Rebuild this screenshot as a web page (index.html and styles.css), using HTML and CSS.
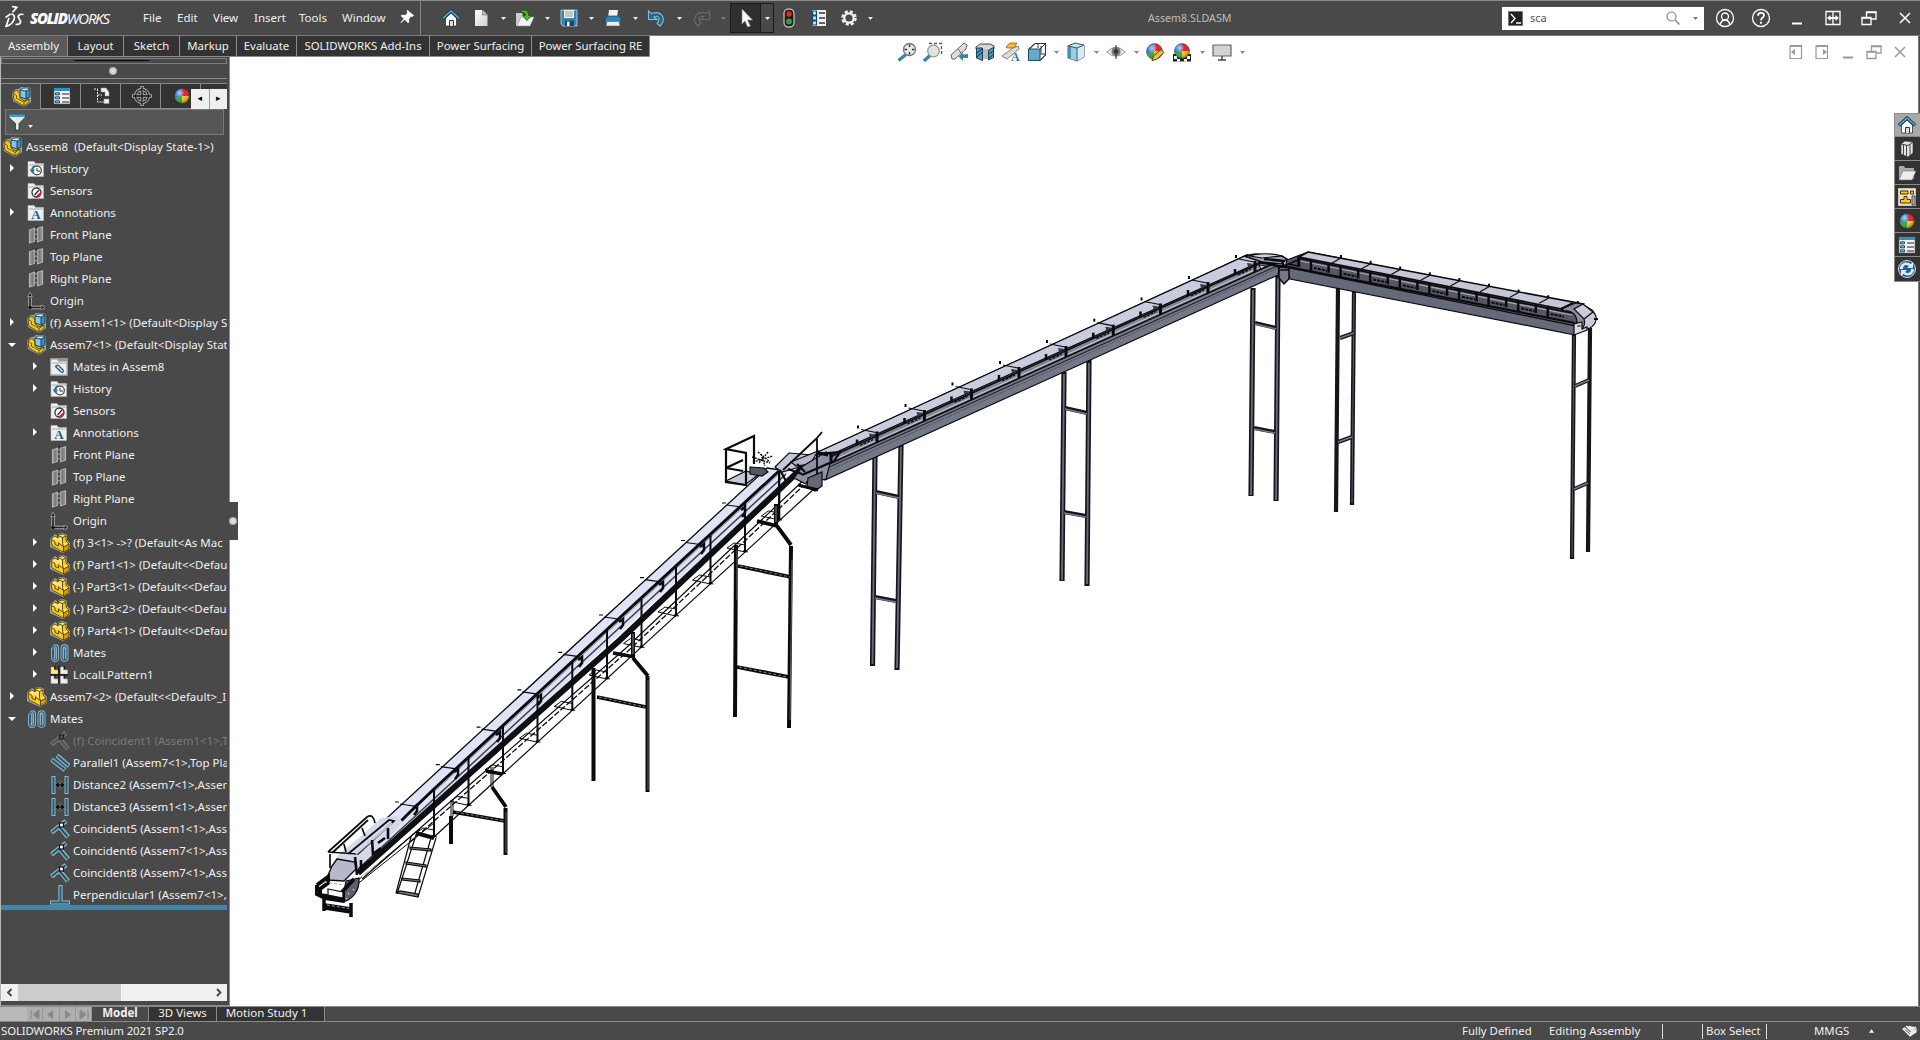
FILE: index.html
```html
<!DOCTYPE html>
<html lang="en">
<head>
<meta charset="utf-8">
<title>Assem8.SLDASM</title>
<link rel="stylesheet" href="styles.css">
</head>
<body>
<svg class="defs" width="0" height="0">
  <defs>
    <linearGradient id="paper" x1="0" y1="0" x2="1" y2="1"><stop offset="0" stop-color="#fff"/><stop offset="1" stop-color="#cfcfcf"/></linearGradient>
    <clipPath id="ballclip"><circle cx="9" cy="9" r="7.5"/></clipPath>
    <radialGradient id="shine" cx=".35" cy=".3" r=".7"><stop offset="0" stop-color="#fff" stop-opacity=".65"/><stop offset=".5" stop-color="#fff" stop-opacity="0"/><stop offset="1" stop-color="#000" stop-opacity=".35"/></radialGradient>
  </defs>
  <symbol id="i-part" viewBox="0 0 20 20">
    <path d="M0 6 5 1 8 3V1l5-1 4 2v5l3 3v6l-7 4L0 14Z" fill="#a8a8a8"/>
    <path d="M1 6l4-3 3 2V2l5-1 3 2v5l3 3v5l-6 3L2 13Z" fill="#f7cb1c"/><path d="M1 6l4-3 3 2V2l5-1 3 2-4 1.500v5L19 11l-5 3-4-3V8L6 9Z" fill="#ffe27a"/>
    <path d="M13.500 14 19 11v5l-5.500 3Z" fill="#d99a00"/><path d="M8 5V2.500l4.500 2L16 3M12.500 4.500v5.500l1 4L19 11M13.500 14v5M1.500 6.500l3.500 2v3l3.500 1.500v-3l5 3.500" fill="none" stroke="#4b3a00" stroke-width=".9"/>
    <path d="M1 6l4-3 3 2V2l5-1 3 2v5l3 3v5l-5.500 3L2 13Z" fill="none" stroke="#4b3a00" stroke-width=".8"/>
  </symbol>
  <symbol id="i-asm" viewBox="0 0 20 20">
    <path d="M0 6 4 2h3l2-2h7l3 2v13l-7 5L1 14Z" fill="#a8a8a8"/>
    <path d="M1 6l4-3 3 4v4l4 3 5-2v3l-5 4L2 13Z" fill="#f7cb1c" stroke="#4b3a00" stroke-width=".8"/>
    <path d="M1.500 6.500l3 2v3l3.500 1.500 4 2.500v4M12 15.500l5-3.500" fill="none" stroke="#4b3a00" stroke-width=".8"/>
    <path d="M8 3l3-2h5l2 1-4 2Z" fill="#d9f0fa"/><path d="M8 3l6 1v8l-6-2Z" fill="#86c5e4"/><path d="M14 4l4-2v8l-4 2Z" fill="#3f8fb8"/>
    <path d="M8 3l3-2h5l2 1v8l-4 2-6-2ZM14 12V4l4-2M8 3l6 1" fill="none" stroke="#143a50" stroke-width=".9"/>
  </symbol>
  <symbol id="i-folder" viewBox="0 0 18 18"><path d="M1 1.500h6l1.500 2H16.500V16.500H1Z" fill="#efefef" stroke="#bbb" stroke-width=".6"/><path d="M2 5h14" stroke="#999" stroke-width=".8"/></symbol>
  <symbol id="i-history" viewBox="0 0 18 18"><use href="#i-folder"/><circle cx="10" cy="10.500" r="4.300" fill="#fff" stroke="#444" stroke-width="1.200"/><path d="M10 8v3h3" fill="none" stroke="#333"/><path d="M2.500 9.500H8L5.300 13.500Z" fill="#1f77a8"/><path d="M5 10c0-2 1-3.500 3-4" fill="none" stroke="#1f77a8" stroke-width="1.600"/></symbol>
  <symbol id="i-sensor" viewBox="0 0 18 18"><use href="#i-folder"/><circle cx="9.500" cy="10.500" r="4.500" fill="#fff" stroke="#333" stroke-width="1.300"/><path d="M9 14.500 13.500 10.500A4.500 4.500 0 0 1 9 15Z" fill="#d3232a" stroke="#d3232a"/><path d="M7.500 13 12 8" stroke="#222" stroke-width="1.200"/></symbol>
  <symbol id="i-annot" viewBox="0 0 18 18"><use href="#i-folder"/><text x="9" y="15.300" text-anchor="middle" font-family="Liberation Serif, serif" font-weight="bold" font-size="13" fill="#1b5f80">A</text></symbol>
  <symbol id="i-matefolder" viewBox="0 0 18 18"><rect x="0" y="0" width="18" height="18" rx="1" fill="#999"/><use href="#i-folder"/><path d="M5 8l6 6c1.500 1 3-.5 2-2L8.500 7.500C7 6.500 5.500 8 6.500 9.500l4 3.500" fill="none" stroke="#2a5d78" stroke-width="1.300"/></symbol>
  <symbol id="i-plane" viewBox="0 0 18 18"><path d="M2.500 4 8 2.200V15L2.500 17ZM10 2.500 15.500.8V14L10 16Z" fill="#8d8d8d" stroke="#b4b4b4" stroke-width="1.200"/><path d="M5.300 3.500V16M12.700 2V15" stroke="#777"/><path d="M9 0V18" stroke="#222" stroke-width="1.200" stroke-dasharray="3 1.500"/></symbol>
  <symbol id="i-origin" viewBox="0 0 18 18"><path d="M3 2V15.500H17" fill="none" stroke="#aaa" stroke-width="3.600"/><path d="M3 2V15.500H16" fill="none" stroke="#1a1a1a" stroke-width="1.500"/><path d="M.7 4.500 3 0 5.300 4.500ZM14 13 18 15.500 14 18Z" fill="#1a1a1a" stroke="#aaa" stroke-width=".7"/><circle cx="3" cy="15.500" r="1.800" fill="#111"/></symbol>
  <symbol id="i-mates" viewBox="0 0 20 20"><g fill="none" stroke-linecap="round"><path d="M2.500 6v8c0 4 5 5 5 1V5c0-3-3.500-3-3.500 0v9M12 5v10c0 3 5 3 5 0V5c0-3-5-3-5 0M14.500 6v11" stroke="#9db4c0" stroke-width="3"/><path d="M2.500 6v8c0 4 5 5 5 1V5c0-3-4-3-4 0v9M12 5v10c0 3 5 3 5 0V5c0-3-5-3-5 0M14.500 6v11" stroke="#245f80" stroke-width="1.200"/></g></symbol>
  <symbol id="i-pattern" viewBox="0 0 18 18"><g stroke="#aaa" stroke-width=".5"><path d="M1 1h3v3h4v4H1Z" fill="#ffef62"/><path d="M10.500 1h3v3h4v4h-7ZM1 10h3v3h4v4.500H1ZM10.500 10h3v3h4v4.500h-7Z" fill="#eee"/></g><path d="M5 0v3M14.500 0v3M5 9.500v2M14.500 9.500v2M8.800 0V18M0 8.800H18" stroke="#151515" stroke-width="1.300"/></symbol>
  <symbol id="i-coin" viewBox="0 0 20 20"><path d="M16 2 1.500 13.500M8.500 6.500 18 18" stroke="#98b4c2" stroke-width="4.600"/><path d="M15.500 2.500 2 13M9 7.500 17.500 17.500" stroke="#1f5570" stroke-width="2"/><rect x="9.500" y="4" width="4" height="4" fill="#fff" stroke="#111" stroke-width="1.200"/></symbol>
  <symbol id="i-coinoff" viewBox="0 0 20 20"><path d="M16 2 1.500 13.500M8.500 6.500 18 18" stroke="#777" stroke-width="4.500"/><path d="M15.500 2.500 2 13M9 7.500 17.500 17.500" stroke="#555" stroke-width="2.400"/><rect x="9.500" y="4" width="4" height="4" fill="#555" stroke="#222" stroke-width="1.200"/></symbol>
  <symbol id="i-par" viewBox="0 0 20 20"><path d="M1.500 6.500 15 17M7 2.500 19 13" stroke="#98b4c2" stroke-width="4.600"/><path d="M2 7 14.500 16.500M7.500 3 18.500 12.500" stroke="#1f5f80" stroke-width="2.200"/></symbol>
  <symbol id="i-dist" viewBox="0 0 20 20"><path d="M3.500 1V19M16.500 1V19" stroke="#98b4c2" stroke-width="4"/><path d="M3.500 2V18M16.500 2V18" stroke="#1f5f80" stroke-width="2"/><path d="M5 10l4-4v3h2V6l4 4-4 4v-3H9v3Z" fill="#111" stroke="#999" stroke-width=".5"/></symbol>
  <symbol id="i-perp" viewBox="0 0 20 20"><path d="M10.500 0V17M0 17.500H20" stroke="#98b4c2" stroke-width="4.200"/><path d="M10.500 1V17M1 17.500H19" stroke="#1f5f80" stroke-width="2"/></symbol>
  <symbol id="i-list" viewBox="0 0 18 18"><path d="M1 1H17V17H1Z" fill="#f2f2f2" stroke="#555" stroke-width=".6"/><path d="M1 1H17V4H1Z" fill="#2f93c0"/><path d="M9 7h7M9 11h7M9 15h7" stroke="#222" stroke-width="1.200"/><g fill="#9fd0e8" stroke="#174a66"><path d="M2.500 5.800h4v2h-4ZM2.500 9.800h4v2h-4ZM2.500 13.800h4v2h-4Z"/></g></symbol>
  <symbol id="i-opts" viewBox="0 0 18 18"><path d="M2 1H16V17H2Z" fill="#f2f2f2"/><path d="M9 4h6M9 9h6M9 14h6" stroke="#333" stroke-width="1.300"/><g fill="#cfe6f2" stroke="#174a66" stroke-width="1.200"><path d="M2.500 2h4v4h-4ZM2.500 7h4v4h-4ZM2.500 12h4v4h-4Z"/></g></symbol>
  <symbol id="i-tree" viewBox="0 0 18 18"><path d="M1 2h4M4.500 2V15H11M4.500 8H9M9 3h3" stroke="#eee" fill="none" stroke-dasharray="2 1"/><path d="M8 1h5l3 4v4h-4V5H8ZM11 12h5v4.500h-5Z" fill="#f0f0f0" stroke="#999" stroke-width=".5"/></symbol>
  <symbol id="i-target" viewBox="0 0 20 20"><circle cx="10" cy="10" r="6.500" fill="none" stroke="#a5a5a5" stroke-width="3.400"/><path d="M10 0V20M0 10H20" stroke="#a5a5a5" stroke-width="3.400"/><circle cx="10" cy="10" r="6.500" fill="none" stroke="#161616" stroke-width="1.200"/><path d="M10 1V19M1 10H19" stroke="#161616" stroke-width="1.300"/></symbol>
  <symbol id="i-ball" viewBox="0 0 18 18"><g clip-path="url(#ballclip)"><path d="M0 0H9V9L0 12Z" fill="#2a76d2"/><path d="M9 0h9V9L9 9Z" fill="#d8202a"/><path d="M0 11 9 9v9H0Z" fill="#36a53c"/><path d="M9 9h9v9H9Z" fill="#f5c322"/></g><circle cx="9" cy="9" r="7.500" fill="url(#shine)" stroke="#333" stroke-width=".5"/></symbol>
  <symbol id="i-funnel" viewBox="0 0 18 18"><path d="M1 2H17V4.500L11 10.500V17H7.500V10.500L1 4.500Z" fill="#e8e8e8" stroke="#333" stroke-width=".8"/><path d="M1 1.500H17V4H1Z" fill="#3aa0cc"/></symbol>
  <symbol id="i-home" viewBox="0 0 18 18"><path d="M3.500 9V17H14.500V9L9 4Z" fill="#fff" stroke="#333" stroke-width=".8"/><path d="M7.500 17v-5.500h4V17" fill="#ddd" stroke="#333"/><path d="M.8 9.500 9 2l8.200 7.500" fill="none" stroke="#12445e" stroke-width="3.400"/><path d="M1 9.200 9 2l8 7.200" fill="none" stroke="#5fa8cc" stroke-width="1.500"/></symbol>
  <symbol id="i-doc" viewBox="0 0 18 18"><path d="M3 1H10.500L15.500 6V17H3Z" fill="url(#paper)"/><path d="M10.500 1V6h5" fill="#bbb" stroke="#777" stroke-width=".7"/></symbol>
  <symbol id="i-open" viewBox="0 0 20 18"><path d="M1 4h6l1 2h7v11H1Z" fill="#ccc"/><path d="M2 17 6 8H19l-4 9Z" fill="#f6f6f6" stroke="#999" stroke-width=".6"/><path d="M6 1.500c5-1.500 8 1 7.500 5H16.500L12 11.500 7.500 6.500h3C10.800 4 9 3 6 3.500Z" fill="#56b52b" stroke="#17570b" stroke-width=".9"/></symbol>
  <symbol id="i-save" viewBox="0 0 18 18"><path d="M1 1H17V17H3L1 15Z" fill="#3487b0" stroke="#bcd9e8" stroke-width=".8"/><path d="M4 1H14V9H4Z" fill="#f0f0f0"/><path d="M5 3h8M5 5h8M5 7h8" stroke="#888" stroke-width=".8"/><path d="M5 11.500H14V17H5Z" fill="#174860"/><path d="M7 12.500h2.500V17H7Z" fill="#eee"/></symbol>
  <symbol id="i-print" viewBox="0 0 18 18"><path d="M5 1H14L13 9H4Z" fill="#f4f4f4"/><path d="M1 9 4 7H15l2 2v5H1Z" fill="#2d86b1" stroke="#123f57" stroke-width=".7"/><path d="M3 12.500H15L16 17H2Z" fill="#ececec" stroke="#666" stroke-width=".6"/></symbol>
  <symbol id="i-undo" viewBox="0 0 20 18"><path d="M1.500 2V10.500H10L7 8c4-2 7 1 3 6.500l3 2.500C20 10 15 1 4.500 4.500Z" fill="#24688c" stroke="#8bb8cf" stroke-width="1.100"/></symbol>
  <symbol id="i-redo" viewBox="0 0 20 18"><path d="M18.500 2V10.500H10L13 8C9 6 6 9 10 14.500L7 17C0 10 5 1 15.500 4.500Z" fill="#484848" stroke="#696969" stroke-width="1.200"/></symbol>
  <symbol id="i-cursor" viewBox="0 0 18 20"><path d="M5 1 15.500 12H10.500L13.500 18 10.500 19 8 13 5 16Z" fill="#f8f8f8" stroke="#888" stroke-width=".6"/></symbol>
  <symbol id="i-light" viewBox="0 0 14 20"><rect x="2" y="1" width="10" height="18" rx="4.500" fill="#1d1d1d" stroke="#b5b5b5" stroke-width="1.400"/><circle cx="7" cy="6" r="2.700" fill="#e02a20"/><circle cx="7" cy="13.500" r="2.900" fill="#37a044"/></symbol>
  <symbol id="i-gear" viewBox="0 0 18 18"><circle cx="9" cy="9" r="6.300" fill="none" stroke="#ededed" stroke-width="3" stroke-dasharray="2.950 2"/><circle cx="9" cy="9" r="4.700" fill="none" stroke="#ededed" stroke-width="2.300"/></symbol>
  <symbol id="i-pin" viewBox="0 0 16 16"><path d="M8 1 15 7 13 8.500 12 8 9.500 11 10 14 8.500 15 5 11.500 1 15 .5 14.500 4 10.500.8 7.500 2 6 5.500 6.500 8 4 7 2.500Z" fill="#fff"/></symbol>
  <symbol id="i-down" viewBox="0 0 7 4"><path d="M0 0H7L3.500 4Z" fill="currentColor"/></symbol>
  <symbol id="i-mini" viewBox="0 0 18 18"><path d="M4 14.500H14" stroke="currentColor" stroke-width="2"/></symbol>
  <symbol id="i-restore" viewBox="0 0 18 18"><path d="M2 8.500H11V15.500H2ZM6.500 8V3H16V10H11.500" fill="none" stroke="currentColor" stroke-width="1.300"/><path d="M6 3.500H16.500M1.500 9H11" stroke="currentColor" stroke-width="1.500"/></symbol>
  <symbol id="i-close" viewBox="0 0 18 18"><path d="M4 4 14 14M14 4 4 14" stroke="currentColor" stroke-width="1.500"/></symbol>
  <symbol id="i-zoomfit" viewBox="0 0 20 20"><path d="M9.500 12 1.500 18.500" stroke="#3d86a8" stroke-width="3.400"/><circle cx="12.500" cy="7.500" r="6" fill="#e9e9e9" stroke="#777" stroke-width="1.300"/><path d="M12.500 2.500v10M7.500 7.500h10" stroke="#333" stroke-width="1.500" stroke-dasharray="2.600 4.800"/></symbol>
  <symbol id="i-zoomarea" viewBox="0 0 20 20"><path d="M6 1.500H18.500V13" fill="none" stroke="#555" stroke-width="1.300" stroke-dasharray="3 2"/><path d="M7.500 13 1 19" stroke="#3d86a8" stroke-width="3.400"/><circle cx="10.500" cy="9" r="5.800" fill="#e3e3e3" stroke="#999" stroke-width="1.300"/></symbol>
  <symbol id="i-prev" viewBox="0 0 20 20"><path d="M2 13 13 3 15 1 18 3 17 7 6 17 3 17Z" fill="#ddd" stroke="#666"/><path d="M9 7l3 4" stroke="#666"/><path d="M19 12v4h-5v3L9.500 14.500 14 10.500V12.500Z" fill="#3a86ac"/></symbol>
  <symbol id="i-section" viewBox="0 0 20 20"><path d="M1 5 5 2H15L19 4V7L14 8 13 16H8L7 8 1 7Z" fill="#d5d8da" stroke="#444"/><path d="M8 7h5v10H8Z" fill="#bbb"/><path d="M1.500 6H7.500V18.500L1.500 16ZM13.500 8 18.500 5.500V15.500L13.500 18Z" fill="#4f9bc0" stroke="#15455f"/><path d="M2 11 7 7M2 15 7 10.500M14 12.500 18 8.500M14 16.500 18 12.500" stroke="#123"/></symbol>
  <symbol id="i-dynann" viewBox="0 0 20 20"><path d="M5 5 9 1h7l-3 5H6Z" fill="#f8b83a" stroke="#8a5a00" stroke-width=".8"/><path d="M1 14 12 6 17 4 18 7 6 17Z" fill="#ddd" stroke="#666" stroke-width=".8"/><text x="10" y="19" font-family="Liberation Serif, serif" font-size="12" font-weight="bold" fill="#37799a">A</text></symbol>
  <symbol id="i-orient" viewBox="0 0 20 20"><path d="M2 7 8 1.500H18.500V13L13 18.500" fill="#fff" stroke="#333" stroke-width="1.100"/><path d="M13 7 18 2M13 12h5M11 2v4M14 4v7" stroke="#333" fill="none"/><path d="M1.500 7H13V18.500H1.500Z" fill="#66a9ca" stroke="#1c4c66"/></symbol>
  <symbol id="i-style" viewBox="0 0 20 20"><path d="M2 4 9 1 18 3V15L11 19 2 16Z" fill="#c4e2ef" stroke="#3b5969"/><path d="M2 4 11 6V19L2 16Z" fill="#9dcbe0"/><path d="M11 6 18 3V15L11 19Z" fill="#d5e9f2"/><path d="M2 4 5 5V17L2 16Z" fill="#4c92b3"/><path d="M2 4 11 6 18 3M11 6V19" stroke="#3b5969" fill="none"/></symbol>
  <symbol id="i-eye" viewBox="0 0 20 20"><path d="M.5 10Q10 .5 19.500 10 10 18.500.5 10Z" fill="#e4e4e4" stroke="#999"/><circle cx="10" cy="9.500" r="4.600" fill="#7b7b7b"/><path d="M10 3V17" stroke="#444" stroke-width="1.200"/><circle cx="10" cy="9.500" r="2.300" fill="#333"/></symbol>
  <symbol id="i-appear" viewBox="0 0 20 20"><use href="#i-ball" x="0" y="0" width="19" height="19"/><path d="M7 18.500 8.500 14 16 7.500 19 10.500 11.500 17.500Z" fill="#eebd49" stroke="#574010"/></symbol>
  <symbol id="i-scene" viewBox="0 0 20 20"><path d="M1 12H19V19.500H1Z" fill="#222"/><path d="M2 14h3v3H2ZM5 17h3v2.500H5ZM12 17h3v2.500h-3ZM15 14h3v3h-3Z" fill="#fff"/><use href="#i-ball" x="1" y="0" width="18" height="18"/></symbol>
  <symbol id="i-monitor" viewBox="0 0 20 20"><path d="M1 3H19V14H1Z" fill="#d2d2d2" stroke="#666" stroke-width="1.200"/><path d="M10 14v4M6 18h8" stroke="#444" stroke-width="1.500"/></symbol>
</svg>

<header class="titlebar">
  <div class="brand">
    <svg class="ds" viewBox="0 0 22 26"><g fill="none" stroke="#fff" stroke-width="1.700" stroke-linejoin="round"><path d="M8 1.500l5 .8-4.500 5M1.500 12.500l5-3.500M7 9c6 0 4 10-5 12.500L5 13"/><path d="M19.500 9.500c-4-1-6.500 1.500-4.500 4s3 6-3.500 6"/></g></svg>
    <span class="wordmark"><b>SOLID</b>WORKS</span>
  </div>
  <nav class="menu"><span class="m1">File</span><span class="m2">Edit</span><span class="m3">View</span><span class="m4">Insert</span><span class="m5">Tools</span><span class="m6">Window</span></nav>
  <div class="pin"><svg width="15" height="15"><use href="#i-pin"/></svg></div>
  <div class="quick">
    <span class="q home"><svg width="18" height="18"><use href="#i-home"/></svg></span>
    <span class="q"><svg width="18" height="18"><use href="#i-doc"/></svg></span><span class="arr"><svg><use href="#i-down"/></svg></span>
    <span class="q"><svg width="20" height="18"><use href="#i-open"/></svg></span><span class="arr"><svg><use href="#i-down"/></svg></span>
    <span class="q"><svg width="18" height="18"><use href="#i-save"/></svg></span><span class="arr"><svg><use href="#i-down"/></svg></span>
    <span class="q"><svg width="18" height="18"><use href="#i-print"/></svg></span><span class="arr"><svg><use href="#i-down"/></svg></span>
    <span class="q"><svg width="20" height="18"><use href="#i-undo"/></svg></span><span class="arr"><svg><use href="#i-down"/></svg></span>
    <span class="q"><svg width="20" height="18"><use href="#i-redo"/></svg></span><span class="arr dim"><svg><use href="#i-down"/></svg></span>
    <span class="select"><span class="cur"><svg width="18" height="20"><use href="#i-cursor"/></svg></span><span class="arr"><svg><use href="#i-down"/></svg></span></span>
    <span class="q w30"><svg width="14" height="20"><use href="#i-light"/></svg></span>
    <span class="q w30"><svg width="18" height="18"><use href="#i-opts"/></svg></span>
    <span class="q w30"><svg width="18" height="18"><use href="#i-gear"/></svg></span><span class="arr"><svg><use href="#i-down"/></svg></span>
  </div>
  <div class="doctitle">Assem8.SLDASM</div>
  <div class="search">
    <svg width="15" height="15" viewBox="0 0 15 15"><path d="M.5.5h14v14H.5Z" fill="#222" stroke="#777"/><path d="M3 3l4 4.500L3 12M8 12h5" fill="none" stroke="#fff" stroke-width="1.400"/></svg>
    <span class="term">sca</span>
    <svg width="14" height="14" viewBox="0 0 14 14"><circle cx="5.500" cy="5.500" r="4.500" fill="none" stroke="#888" stroke-width="1.200"/><path d="M9 9l4.500 4.500" stroke="#888" stroke-width="1.500"/></svg>
    <span class="arr grey"><svg><use href="#i-down"/></svg></span>
  </div>
  <div class="winctl">
    <span><svg width="20" height="20" viewBox="0 0 20 20"><g fill="none" stroke="#fff" stroke-width="1.300"><circle cx="10" cy="10" r="8.500"/><circle cx="10" cy="8.500" r="3.500"/><path d="M5 17c1-4 3-5 5-5s4 1 5 5"/></g></svg></span>
    <span><svg width="20" height="20" viewBox="0 0 20 20"><g fill="none" stroke="#fff"><circle cx="10" cy="10" r="8.500" stroke-width="1.300"/><path d="M7 7.800c0-4 6-3.500 6-.5 0 2.200-3 2.200-3 5" stroke-width="1.800"/><path d="M10 13.700v2" stroke-width="1.800"/></g></svg></span>
    <span><svg width="18" height="18"><use href="#i-mini"/></svg></span>
    <span><svg width="18" height="18" viewBox="0 0 18 18"><path d="M2 2.500H16V15.500H2ZM9 3V15" fill="none" stroke="#fff" stroke-width="1.300"/><path d="M3 9 6.500 6v2h5V6L15 9l-3.500 3v-2h-5v2Z" fill="#fff"/></svg></span>
    <span><svg width="18" height="18"><use href="#i-restore"/></svg></span>
    <span class="x"><svg width="18" height="18"><use href="#i-close"/></svg></span>
  </div>
</header>

<div class="ribbon">
  <div class="rtabs"><span class="t1 on">Assembly</span><span class="t2">Layout</span><span class="t3">Sketch</span><span class="t4">Markup</span><span class="t5">Evaluate</span><span class="t6">SOLIDWORKS Add-Ins</span><span class="t7">Power Surfacing</span><span class="t8">Power Surfacing RE</span></div>
</div>

<main class="work">
  <aside class="panel">
    <div class="grip"><i></i></div>
    <div class="flydot"><i></i></div>
    <div class="ptabs">
      <span class="on"><svg width="20" height="20"><use href="#i-asm"/></svg></span>
      <span><svg width="18" height="18"><use href="#i-list"/></svg></span>
      <span><svg width="18" height="18"><use href="#i-tree"/></svg></span>
      <span><svg width="20" height="20"><use href="#i-target"/></svg></span>
      <span><svg width="18" height="18"><use href="#i-ball"/></svg></span>
      <span class="last"><svg width="18" height="18"><use href="#i-list"/></svg></span>
      <div class="scroller"><b>◂</b><b>▸</b></div>
    </div>
    <div class="filter"><svg width="18" height="18"><use href="#i-funnel"/></svg><svg class="fa" width="5" height="3"><use href="#i-down"/></svg></div>
    <div class="tree">
      <div class="row root"><svg class="b"><use href="#i-asm"/></svg><span>Assem8&nbsp; (Default&lt;Display State-1&gt;)</span></div>
      <div class="row"><i class="r"></i><svg><use href="#i-history"/></svg><span>History</span></div>
      <div class="row"><i></i><svg><use href="#i-sensor"/></svg><span>Sensors</span></div>
      <div class="row"><i class="r"></i><svg><use href="#i-annot"/></svg><span>Annotations</span></div>
      <div class="row"><i></i><svg><use href="#i-plane"/></svg><span>Front Plane</span></div>
      <div class="row"><i></i><svg><use href="#i-plane"/></svg><span>Top Plane</span></div>
      <div class="row"><i></i><svg><use href="#i-plane"/></svg><span>Right Plane</span></div>
      <div class="row"><i></i><svg><use href="#i-origin"/></svg><span>Origin</span></div>
      <div class="row"><i class="r"></i><svg class="b"><use href="#i-asm"/></svg><span>(f) Assem1&lt;1&gt; (Default&lt;Display S</span></div>
      <div class="row"><i class="d"></i><svg class="b"><use href="#i-asm"/></svg><span>Assem7&lt;1&gt; (Default&lt;Display Stat</span></div>
      <div class="row sub"><i class="r"></i><svg><use href="#i-matefolder"/></svg><span>Mates in Assem8</span></div>
      <div class="row sub"><i class="r"></i><svg><use href="#i-history"/></svg><span>History</span></div>
      <div class="row sub"><i></i><svg><use href="#i-sensor"/></svg><span>Sensors</span></div>
      <div class="row sub"><i class="r"></i><svg><use href="#i-annot"/></svg><span>Annotations</span></div>
      <div class="row sub"><i></i><svg><use href="#i-plane"/></svg><span>Front Plane</span></div>
      <div class="row sub"><i></i><svg><use href="#i-plane"/></svg><span>Top Plane</span></div>
      <div class="row sub"><i></i><svg><use href="#i-plane"/></svg><span>Right Plane</span></div>
      <div class="row sub"><i></i><svg><use href="#i-origin"/></svg><span>Origin</span></div>
      <div class="row sub"><i class="r"></i><svg class="b"><use href="#i-part"/></svg><span>(f) 3&lt;1&gt; -&gt;? (Default&lt;As Mac</span></div>
      <div class="row sub"><i class="r"></i><svg class="b"><use href="#i-part"/></svg><span>(f) Part1&lt;1&gt; (Default&lt;&lt;Defau</span></div>
      <div class="row sub"><i class="r"></i><svg class="b"><use href="#i-part"/></svg><span>(-) Part3&lt;1&gt; (Default&lt;&lt;Defau</span></div>
      <div class="row sub"><i class="r"></i><svg class="b"><use href="#i-part"/></svg><span>(-) Part3&lt;2&gt; (Default&lt;&lt;Defau</span></div>
      <div class="row sub"><i class="r"></i><svg class="b"><use href="#i-part"/></svg><span>(f) Part4&lt;1&gt; (Default&lt;&lt;Defau</span></div>
      <div class="row sub"><i class="r"></i><svg class="b"><use href="#i-mates"/></svg><span>Mates</span></div>
      <div class="row sub"><i class="r"></i><svg><use href="#i-pattern"/></svg><span>LocalLPattern1</span></div>
      <div class="row"><i class="r"></i><svg class="b"><use href="#i-part"/></svg><span>Assem7&lt;2&gt; (Default&lt;&lt;Default&gt;_I</span></div>
      <div class="row"><i class="d"></i><svg class="b"><use href="#i-mates"/></svg><span>Mates</span></div>
      <div class="row sub off"><i></i><svg class="b"><use href="#i-coinoff"/></svg><span>(f) Coincident1 (Assem1&lt;1&gt;,T</span></div>
      <div class="row sub"><i></i><svg class="b"><use href="#i-par"/></svg><span>Parallel1 (Assem7&lt;1&gt;,Top Pla</span></div>
      <div class="row sub"><i></i><svg class="b"><use href="#i-dist"/></svg><span>Distance2 (Assem7&lt;1&gt;,Assem</span></div>
      <div class="row sub"><i></i><svg class="b"><use href="#i-dist"/></svg><span>Distance3 (Assem1&lt;1&gt;,Assem</span></div>
      <div class="row sub"><i></i><svg class="b"><use href="#i-coin"/></svg><span>Coincident5 (Assem1&lt;1&gt;,Ass</span></div>
      <div class="row sub"><i></i><svg class="b"><use href="#i-coin"/></svg><span>Coincident6 (Assem7&lt;1&gt;,Ass</span></div>
      <div class="row sub"><i></i><svg class="b"><use href="#i-coin"/></svg><span>Coincident8 (Assem7&lt;1&gt;,Ass</span></div>
      <div class="row sub"><i></i><svg class="b"><use href="#i-perp"/></svg><span>Perpendicular1 (Assem7&lt;1&gt;,A</span></div>
      <div class="rollback"></div>
    </div>
    <div class="hscroll">
      <svg width="17" height="17" viewBox="0 0 17 17"><path d="M10.500 5 7 8.500l3.500 3.500" fill="none" stroke="#444" stroke-width="1.800"/></svg>
      <div class="track"><div class="thumb"></div></div>
      <svg width="17" height="17" viewBox="0 0 17 17"><path d="M7 5l3.500 3.500L7 12" fill="none" stroke="#444" stroke-width="1.800"/></svg>
    </div>
    <div class="pfoot"></div>
    <div class="splitter"><i></i></div>
  </aside>

  <section class="viewport">
    <svg class="model" viewBox="230 57 1688 949">
      <defs>
        <g id="post"><path d="M434 788V837" stroke-width="2"/><path d="M432 836l5 1M434 837l-18-4 7-5 11 2" stroke-width="1"/><circle cx="434" cy="836" r="1.500" fill="#000" stroke="none"/></g>
        <path id="tickA" d="M395 802h4M400 804l14 2"/>
        <path id="hangA" d="M413 808l4-3v6l-3 4" stroke-width="2.500"/>
        <g id="tickB"><path d="M1047 343v-3" stroke-width="2"/><path d="M1050 344l15 3" stroke-width="1.200"/><path d="M1066 346v11" stroke-width="3"/><path d="M1046 354v6" stroke-width="2.500"/><path d="M1049 360l13-6" stroke-dasharray="3 1" stroke-width="1.300"/><path d="M1058 348l7 1-6 3Z" fill="#3c3c48" stroke="none"/></g>
        <g id="bayC"><path d="M1311 260v11M1299 258v9" stroke-width="2.500"/><path d="M1314 268l13 2.700" stroke-width="2" stroke-dasharray="3 1"/><path d="M1341 258l-9 5" stroke-width="1.200"/><path d="M1341 258v-3" stroke-width="2"/></g>
      </defs>
      <g fill="none" stroke="#0b0b0f" stroke-width="1.200">
        <!-- trestles under the second and third conveyors -->
        <g stroke="#15151b" stroke-width="5.200">
          <path d="M875 455 872.500 666M901 445 897 670M1064 372 1062 581M1089 360 1087 586M1253 288 1251 496M1278 276 1276 501"/>
          <path d="M1338 288 1336 512M1354 290 1352 505M1574 333 1572 559M1590 328 1588 552" stroke-width="4.200"/>
        </g>
        <g stroke="#696b7b" stroke-width="1.800"><path d="M875 458 872.500 664M901 447 897 668M1064 374 1062 580M1089 363 1087 584M1253 290 1251 495M1278 278 1276 500"/><path d="M1354 293 1352 503M1574 336 1572 557" stroke-width=".8"/></g>
        <g stroke="#15151b" stroke-width="4"><path d="M876 492l23 5M875 597l21 4M1065 408l22 5M1064 512l22 4M1255 323l21 5M1254 428l21 4M1340 338l14-5M1338 442l14-5M1575 386l14-6M1574 489l14-6"/></g>
        <g stroke="#777988" stroke-width="1.500"><path d="M876 493l23 5M875 598l21 4M1065 409l22 5M1064 513l22 4M1255 324l21 5M1254 429l21 4M1340 338l14-5M1338 442l14-5M1575 386l14-6M1574 489l14-6"/></g>

        <!-- second conveyor -->
        <path d="M818 452 1247 255 1266 260 1279 268 1278 275 825 480 812 470Z" fill="#747786"/>
        <path d="M818 452 1247 255 1262 261 830 455Z" fill="#c9ccdd"/>
        <path d="M830 457 1262 263 1275 265 828 465Z" fill="#858796" stroke="none"/>
        <path d="M829 464 1275 263" stroke-width="1.600"/><path d="M829 462 1272 262" stroke="#d5d5df" stroke-width=".9"/>
        <path d="M828 467.500 1277 266" stroke-width=".9"/><path d="M830 470 1278 268" stroke="#444653" stroke-width=".8" stroke-dasharray="2 1"/>
        <path d="M830 457 1262 262.500" stroke-width="1.500"/>
        <use href="#tickB" x="-189" y="85.500"/><use href="#tickB" x="-141.500" y="64"/><use href="#tickB" x="-94.500" y="42.500"/><use href="#tickB" x="-47" y="21"/><use href="#tickB"/><use href="#tickB" x="47.300" y="-21.300"/><use href="#tickB" x="94.500" y="-42.500"/><use href="#tickB" x="142" y="-64"/><use href="#tickB" x="189" y="-85"/>

        <!-- third conveyor -->
        <path d="M1285 265 1575 325V335L1290 279Z" fill="#666978"/>
        <path d="M1287 260 1308 252 1583 305 1576 326 1285 267Z" fill="#555762"/>
        <path d="M1308 252 1583 304 1572 311 1299 257Z" fill="#c5c7d6" stroke-width="1.600"/>
        <path d="M1299 258.500 1572 313" stroke-width="1.600"/><path d="M1300 261 1572 315" stroke="#a9abb9" stroke-width="1.200"/><path d="M1286 266.500 1575 323" stroke-width="2.200"/>
        <use href="#bayC"/><use href="#bayC" x="29.600" y="5.800"/><use href="#bayC" x="59.200" y="11.500"/><use href="#bayC" x="88.800" y="17.300"/><use href="#bayC" x="118.400" y="23"/><use href="#bayC" x="148" y="28.800"/><use href="#bayC" x="177.600" y="34.500"/><use href="#bayC" x="207.200" y="40.300"/><use href="#bayC" x="236.800" y="46"/>
        <path d="M1564 311c8-1 13 3 13 13l-2 9 14-6c7-4 7-13 3-17l-10-6-6-1-14 5Z" fill="#8b8d9c"/>
        <path d="M1583 304l10 8-9 7-10-10ZM1593 312c5 4 4 12-3 16l-9 2c4-4 4-8 3-11Z" fill="#c9cbd9"/>
        <path d="M1574 324v11l13-5v-3l-5 2v-7ZM1577 326h4" fill="#ddd"/><path d="M1561 309l12-6M1594 319h4" stroke-width="2"/>

        <!-- transfer point between second and third -->
        <path d="M1244 256 1255 254 1282 256 1287 259 1281 264 1262 262Z" fill="#a2a5b5" stroke-width="1.500"/><path d="M1250 256c8-3 22-3 32 0l-20 2Z" fill="#cfd2e0"/>
        <path d="M1258 262l27 5M1264 259l19 2v5" stroke-width="2.500"/><path d="M1259 265l7 1-5 3Z" fill="#fff"/>
        <path d="M1279 267l10 1v11l-5 5-5-6Z" fill="#777988" stroke-width="1.500"/><path d="M1279 270h10M1284 266l16-7M1288 264l10 2v-9" stroke-width="1.500"/>

        <!-- inclined conveyor -->
        <path d="M358 880 420 829M355 886 434 823" stroke-width="1"/>
        <path d="M434 837 815 488" stroke-width="1.200"/>
        <path d="M350 852 767 468 790 470 778 488 360 873Z" fill="#dfe4f4" stroke="none"/>
        <path d="M350 852 767 468 781 470" stroke-width="1.300"/>
        <path d="M358 873 620 640 803 467" stroke="#101014" stroke-width="6"/><path d="M358 869 786 474" stroke="#3c3d48" stroke-width="1.500"/>
        <path d="M362 877 624 644 806 472" stroke="#fff" stroke-width="1"/><path d="M362 879 626 648 808 476" stroke-width="1.200"/><path d="M410 842 628 651 802 487" stroke-dasharray="6 2" stroke-width="1.300"/>
        <path d="M388 834 410 812 434 789 779 471" stroke-width="3"/><path d="M434 792 779 474" stroke="#666873" stroke-width=".7"/>
        <g><use href="#post"/><use href="#post" x="34.500" y="-31.600"/><use href="#post" x="69" y="-63.200"/><use href="#post" x="103.500" y="-94.800"/><use href="#post" x="138.300" y="-126.600"/><use href="#post" x="173" y="-158"/><use href="#post" x="207.500" y="-189.500"/><use href="#post" x="242" y="-221"/><use href="#post" x="276.500" y="-253"/><use href="#post" x="311" y="-285"/><use href="#post" x="345.300" y="-317"/></g>
        <g><use href="#tickA"/><use href="#tickA" x="-52" y="0" display="none"/><use href="#tickA" x="40.800" y="-37.400"/><use href="#tickA" x="81.600" y="-74.800"/><use href="#tickA" x="122.400" y="-112.200"/><use href="#tickA" x="163.200" y="-149.600"/><use href="#tickA" x="204" y="-187"/><use href="#tickA" x="245" y="-224.400"/><use href="#tickA" x="286" y="-261.500"/><use href="#tickA" x="327" y="-299"/></g>
        <g><use href="#hangA"/><use href="#hangA" x="41" y="-36"/><use href="#hangA" x="83" y="-73"/><use href="#hangA" x="124" y="-110"/><use href="#hangA" x="165" y="-148"/><use href="#hangA" x="206" y="-186"/><use href="#hangA" x="246" y="-223"/><use href="#hangA" x="287" y="-261"/><use href="#hangA" x="328" y="-298"/></g>

        <!-- trestles under the inclined conveyor -->
        <g stroke-width="4"><path d="M451 816V844M505.500 808V855M593.500 668V781M647.500 676V792M736 545 735 717M791 546 789 728"/></g>
        <path d="M451 800v16M453 800v16M491 767v20M493 767v20" stroke-width="1"/>
        <g stroke="#777" stroke-width=".8"><path d="M506 812V853M648 680V790M737 550V600M792 560 790 720"/></g>
        <g stroke-width="3.800"><path d="M492 787l14 20M453 812l52 9M633 658l15 18M597 697l49 10M777 526l14 19M738 566l53 11M737 667l52 10M613 653l22 4M757 521l20 5M486 771l16 3"/></g>
        <path d="M633 632v26M776 504v22" stroke-width="4"/><path d="M633 634v20M776 506v16" stroke="#888" stroke-width="1"/>
        <g stroke="#999" stroke-width=".8" stroke-dasharray="3 2"><path d="M456 812l48 9M599 697l46 10M740 566l50 11M739 667l48 10"/></g>

        <!-- access ladder -->
        <g stroke-width="1.200" fill="#fff"><path d="M416 835 397 894M411 837 396 893M436 838 418 897M431 838 414 896"/><path d="M410 847l21 2v2l-21-2ZM406 862l20 3v2l-20-3ZM402 878l18 2v2l-18-2ZM397 893l21 4v-3l-18-3Z" fill="#777"/></g>
        <path d="M416 833l18 5" stroke-width="4"/>

        <!-- loading hopper and tail pulley -->
        <path d="M331 866l8-12 20-16 22-20 16-2 6 6-30 31-20 18Z" fill="#d5d9e8" stroke="none"/>
        <path d="M328 852 367 817c5-3 7 1 8 6M332 853 368 820M330 854v14M346 852l-2-8M365 836l-3-8M328 852l30 2 36-33-5-1-41 34" stroke-width="1.700"/>
        <path d="M356 854 392 823" stroke="#c8cad6" stroke-width="2"/><path d="M337 859l18 3 1 7-12 12-18-1 6-14Z" fill="#b5b9cb" stroke-width="1.300"/><path d="M355 857l2 18M372 840l1 14 8-6M388 828v11M361 860v8l8-7M378 843l7-5" stroke-width="2.600"/>
        <path d="M346 881l13-3c1 12-6 22-17 24Z" fill="#5d5f6c"/><path d="M348 893l1 1M353 889l1 1M346 898l1 1" stroke="#ddd"/>
        <path d="M317 885l11-8v6l-8 6v6l23 4v-8l11-12M317 885v9l8 4 20 3" stroke-width="4"/><path d="M328 889l15 3v6l-15-3Z" fill="#fff"/><path d="M324 882l20 3" stroke="#aaa" stroke-dasharray="3 2"/>
        <path d="M324 897v14M351 903v14M325 905l26 4M325 908l26 4" stroke-width="3.500"/><path d="M327 905l22 3.500" stroke="#bbb" stroke-width=".8" stroke-dasharray="3 2"/>

        <!-- drive platform -->
        <path d="M726 481 746 471 758 475 745 485Z" fill="#c5c8d6"/><path d="M726 449v33l20 3V453l-20-4 28-13v28M726 468l17-8M726 468l17 3" stroke-width="2.200"/>
        <path d="M750 467l14 1 4 4-6 4-12-2Z" fill="#555762"/><path d="M752 457l18 6M758 452l12 10M768 452l-9 11M753 462l20-6M761 454l4 12" stroke-dasharray="2 1" stroke-width="1.400"/>
        <path d="M775 467 789 453 812 455 803 466 782 472Z" fill="#c5c8d6"/><path d="M791 462 818 451 810 464 796 466Z" fill="#b4b7c8"/><path d="M803 466 826 452 832 456 826 479 806 484 794 478Z" fill="#8d90a0"/><path d="M783 470 817 438M817 438v53M817 438l5-6M779 471v49" stroke-width="1.800"/>
        <path d="M780 470l6 11M788 469l14 5M797 464l8 8M802 475l32-14 6-9-24 2M806 482l16 4" stroke-width="2.200"/><path d="M808 478l14-6v14l-7 5-8-4Z" fill="#666875"/><path d="M798 485l20 5" stroke-width="3"/><path d="M831 452v9M818 453l10 2" stroke-width="3"/>
      </g>
    </svg>

    <div class="hud">
      <span class="h"><svg><use href="#i-zoomfit"/></svg></span><span class="h"><svg><use href="#i-zoomarea"/></svg></span><span class="h"><svg><use href="#i-prev"/></svg></span><span class="h"><svg><use href="#i-section"/></svg></span><span class="h"><svg><use href="#i-dynann"/></svg></span><span class="h"><svg><use href="#i-orient"/></svg></span><span class="ha"><svg><use href="#i-down"/></svg></span>
      <span class="hw"><svg><use href="#i-style"/></svg></span><span class="ha"><svg><use href="#i-down"/></svg></span><span class="hw"><svg><use href="#i-eye"/></svg></span><span class="ha"><svg><use href="#i-down"/></svg></span><span class="h"><svg><use href="#i-appear"/></svg></span><span class="hw"><svg><use href="#i-scene"/></svg></span><span class="ha"><svg><use href="#i-down"/></svg></span><span class="hw"><svg><use href="#i-monitor"/></svg></span><span class="ha"><svg><use href="#i-down"/></svg></span>
    </div>
    <div class="docctl">
      <span><svg viewBox="0 0 18 18"><path d="M3 3H14.500V15.500H3Z" fill="none" stroke="currentColor" stroke-width="1.200"/><path d="M3 3H15" stroke="currentColor" stroke-width="2"/><path d="M8 6V12L4 9Z" fill="currentColor"/></svg></span>
      <span><svg viewBox="0 0 18 18"><path d="M3 3H14.500V15.500H3Z" fill="none" stroke="currentColor" stroke-width="1.200"/><path d="M3 3H15" stroke="currentColor" stroke-width="2"/><path d="M10 6V12L14 9Z" fill="currentColor"/></svg></span>
      <span><svg><use href="#i-mini"/></svg></span><span><svg><use href="#i-restore"/></svg></span><span><svg><use href="#i-close"/></svg></span>
    </div>
    <div class="taskpane">
      <span class="on"><svg><use href="#i-home"/></svg></span>
      <span><svg viewBox="0 0 18 18"><path d="M3 4 7 1l8 1v11l-5 4-7-3Z" fill="#e4e4e4" stroke="#333" stroke-width=".6"/><path d="M5.500 4.500V15M8.500 5v11M12 4v12M3 4l7 1.500L15 2" stroke="#444" fill="none"/></svg></span>
      <span><svg viewBox="0 0 18 18"><path d="M1 2h5l1 2h9v11H1Z" fill="#aaa"/><path d="M1 16 5 7H18l-4 9Z" fill="#eee" stroke="#777" stroke-width=".6"/></svg></span>
      <span><svg viewBox="0 0 18 18"><path d="M0 0H18V18H0Z" fill="#e8e0c9" stroke="#aaa"/><path d="M2.500 3H10V6H2.500ZM12.500 3h3v3h-3ZM6 8.500h3v3h3.500V15h-10v-3.500H6Z" fill="#ffc917" stroke="#443300"/><path d="M14 8v9h3V8Z" fill="#aaa" stroke="#555"/></svg></span>
      <span><svg><use href="#i-ball"/></svg></span>
      <span><svg><use href="#i-list"/></svg></span>
      <span><svg viewBox="0 0 18 18"><circle cx="9" cy="9" r="8.500" fill="#1f5f90" stroke="#ddd"/><path d="M2 9C2 3 8 1 13 4l2-2v6H9l2-2C8 4 5 5 5 9ZM16 9c0 6-6 8-11 5l-2 2v-6h6l-2 2c3 2 6 1 6-3Z" fill="#d9ecf8"/></svg></span>
    </div>
  </section>
</main>

<div class="views">
  <div class="spacer"></div>
  <div class="nav"><b><svg viewBox="0 0 15 14"><path d="M4 3v9M12 3v9L6 7.500Z" stroke="#888" fill="#888"/></svg></b><b><svg viewBox="0 0 15 14"><path d="M10 3v9L4 7.500Z" fill="#888"/></svg></b><b><svg viewBox="0 0 15 14"><path d="M5 3v9l6-4.500Z" fill="#888"/></svg></b><b><svg viewBox="0 0 15 14"><path d="M4 3v9l6-4.500ZM12 3v9" stroke="#888" fill="#888"/></svg></b></div>
  <span class="v1">Model</span><span class="v2">3D Views</span><span class="v3">Motion Study 1</span>
</div>
<footer class="status">
  <span class="prod">SOLIDWORKS Premium 2021 SP2.0</span>
  <span class="s1">Fully Defined</span><span class="s2">Editing Assembly</span><span class="s3"></span><span class="s4">Box Select</span><span class="s5">MMGS</span>
  <svg class="up" width="5" height="4" viewBox="0 0 6 4"><path d="M0 4H6L3 0Z" fill="#fff"/></svg>
  <svg class="tag" width="16" height="14" viewBox="0 0 16 14"><path d="M1 5l7 7 6-4V5L8 9 3 4ZM4 2l5 5 5-4M7 2l3 2" fill="#eee" stroke="#eee" stroke-width="1.200"/><path d="M3 5.500l5 4.500" stroke="#555"/></svg>
</footer>
</body>
</html>
```
FILE: styles.css
```css
* { box-sizing: border-box; }
body {
  margin: 0;
  width: 1920px;
  height: 1040px;
  overflow: hidden;
  display: flex;
  flex-direction: column;
  background: #494949;
  color: #f0f0f0;
  font: 11.5px/16px "Noto Sans", "Open Sans", sans-serif;
  white-space: nowrap;
}
svg { display: block; flex: none; }
.defs { position: absolute; }

/* title bar */
.titlebar {
  height: 36px;
  flex: none;
  display: flex;
  align-items: center;
  border-top: 1px solid #8a8a8a;
  border-bottom: 1px solid #7b7b7b;
  background: #494949;
}
.titlebar > * { flex: none; }
.brand { width: 143px; display: flex; align-items: center; padding-left: 4px; }
.ds { width: 22px; height: 26px; }
.wordmark { margin-left: 4px; font: italic 15px/20px "Open Sans", sans-serif; letter-spacing: -1.2px; color: #fff; }
.wordmark b { font-weight: 800; }
.menu { display: flex; width: 253px; }
.menu span { flex: none; }
.m1 { width: 34px; } .m2 { width: 36px; } .m3 { width: 41px; } .m4 { width: 45px; } .m5 { width: 43px; }
.pin { width: 25px; height: 34px; border-right: 1px solid #858585; display: flex; align-items: center; padding-left: 4px; padding-bottom: 3px; }
.quick { display: flex; align-items: center; padding-left: 16px; height: 34px; }
.q { width: 32px; display: flex; justify-content: center; }
.q.home { width: 28px; }
.q.w30 { width: 30px; }
.arr { width: 12px; display: flex; justify-content: center; }
.arr svg { width: 5px; height: 3px; color: #eee; }
.arr.dim svg { color: #777; }
.arr.grey svg { color: #777; }
.select { width: 44px; height: 30px; margin: 0 0 0 1px; display: flex; align-items: center; border: 1px solid #1b1b1b; }
.cur { width: 30px; height: 28px; background: #2f2f2f; display: flex; align-items: center; justify-content: center; border-right: 1px solid #1b1b1b; }
.doctitle { width: 84px; margin-left: 272px; color: #bdbdbd; font-size: 10.7px; }
.search { width: 202px; height: 23px; margin-left: 270px; background: #fff; display: flex; align-items: center; padding-left: 6px; color: #555; }
.term { width: 143px; padding-left: 7px; font-size: 11px; }
.search .arr { margin-left: 9px; }
.winctl { display: flex; margin-left: 3px; color: #fff; }
.winctl span { width: 36px; display: flex; justify-content: center; align-items: center; }
.winctl .x { width: 33px; padding-left: 3px; }

/* command tabs */
.ribbon { height: 21px; flex: none; background: #fff; display: flex; width: 1919px; border-right: 1px solid #777; }
.rtabs { display: flex; border-bottom: 1px solid #8c8c8c; }
.rtabs span { background: #333; border-right: 1px solid #8c8c8c; text-align: center; line-height: 20px; font-size: 11.4px; }
.rtabs .on { background: #5a5a5a; }
.t1 { width: 68px; } .t2 { width: 56px; } .t3 { width: 56px; } .t4 { width: 57px; } .t5 { width: 60px; } .t6 { width: 133px; } .t7 { width: 102px; } .t8 { width: 118px; }

/* feature manager */
.work { height: 949px; flex: none; display: flex; }
.panel { width: 230px; position: relative; display: flex; flex-direction: column; background: #494949; border-left: 1px solid #b5b5b5; border-right: 1px solid #8a8a8a; }
.grip { height: 6px; margin: 1px 2px 0 0; border: 1px solid #7d7d7d; flex: none; }
.grip i { display: block; width: 75px; height: 1px; margin: 1px 0 0 72px; background: #000; }
.flydot { height: 15px; flex: none; margin-right: 2px; padding: 3px 0 0 108px; border-bottom: 1px solid #8a8a8a; }
.flydot i, .splitter i { display: block; width: 8px; height: 8px; border-radius: 50%; background: radial-gradient(#ddd 35%, #777); }
.ptabs { height: 26px; flex: none; margin: 4px 2px 0 0; display: flex; position: relative; border-top: 1px solid #8a8a8a; overflow: hidden; }
.ptabs span { width: 40px; flex: none; background: #333; border-right: 1px solid #8a8a8a; border-bottom: 1px solid #8a8a8a; display: flex; align-items: center; justify-content: center; padding-left: 2px; }
.ptabs .on { background: #494949; border-bottom: 0; }
.ptabs .last { width: 27px; border: 0; justify-content: flex-start; padding-left: 8px; }
.scroller { position: absolute; right: 0; bottom: 0; width: 36px; height: 20px; display: flex; gap: 1px; background: #999; }
.scroller b { flex: 1; background: #f0f0f0; color: #000; font: 9px/19px "DejaVu Sans", sans-serif; text-align: center; }
.filter { height: 26px; flex: none; width: 219px; margin-left: 4px; border: 1px solid #777; background: #565656; display: flex; align-items: center; padding-left: 2px; }
.filter .fa { margin: 9px 0 0 2px; }
.tree { flex: 1; min-height: 0; margin-right: 2px; padding-top: 1px; overflow: hidden; }
.row { height: 22px; display: flex; align-items: center; padding-left: 4px; }
.row.sub { padding-left: 27px; }
.row.root { padding-left: 3px; }
.row svg { width: 18px; height: 18px; margin: 0 5px 0 -1px; }
.row svg.b { width: 20px; height: 20px; margin: 0 3px 0 -1px; }
.row i { width: 23px; height: 10px; flex: none; }
.row i::before { content: ""; display: block; margin-left: 5px; }
.row .r::before { border: 4px solid transparent; border-left: 4px solid #fff; border-right: 0; }
.row .d::before { margin: 3px 0 0 3px; width: 0; border: 4px solid transparent; border-top: 4px solid #fff; border-bottom: 0; }
.row.off { color: #7a7a7a; }
.rollback { height: 5px; margin-top: -1px; background: #3f87ad; }
.hscroll { height: 17px; flex: none; margin-right: 2px; display: flex; background: #f0f0f0; }
.track { flex: 1; }
.thumb { width: 103px; height: 17px; background: #cdcdcd; }
.pfoot { height: 5px; flex: none; border-bottom: 1px solid #8a8a8a; }
.splitter { position: absolute; left: 228px; top: 445px; width: 9px; height: 38px; background: #494949; display: flex; align-items: center; z-index: 2; }

/* graphics area */
.viewport { width: 1689px; position: relative; background: #fff; border-right: 1px solid #777; }
.model { width: 1688px; height: 949px; }
.hud { position: absolute; left: 664px; top: -17px; height: 24px; display: flex; align-items: center; }
.hud span { display: flex; justify-content: center; }
.hud svg { width: 20px; height: 20px; }
.h { width: 26px; } .hw { width: 28px; } .ha { width: 12px; }
.hud .ha svg { width: 5px; height: 3px; color: #888; }
.docctl { position: absolute; right: 5px; top: -17px; height: 24px; display: flex; align-items: center; color: #9a9a9a; }
.docctl span { width: 26px; display: flex; justify-content: center; }
.docctl svg { width: 18px; height: 18px; }
.taskpane { position: absolute; left: 1664px; top: 56px; width: 26px; border: 1px solid #8a8a8a; border-right: 0; }
.taskpane span { height: 24px; background: #333; border-bottom: 1px solid #8a8a8a; display: flex; align-items: center; justify-content: center; padding-right: 2px; }
.taskpane span:last-child { border-bottom: 0; }
.taskpane .on { background: #a9a9a9; height: 23px; }
.taskpane svg { width: 18px; height: 18px; }

/* view tabs and status bar */
.views { height: 16px; flex: none; display: flex; border-bottom: 1px solid #8a8a8a; border-top: 1px solid #8a8a8a; }
.spacer { width: 27px; background: #b9b9b9; }
.nav { width: 65px; display: flex; background: #999; gap: 1px; padding-right: 1px; }
.nav b { flex: 1; background: #aeaeae; }
.nav svg { width: 15px; height: 14px; }
.views span { border-right: 1px solid #8a8a8a; text-align: center; line-height: 12px; }
.v1 { width: 57px; font-weight: bold; } .v2 { width: 68px; background: #333; } .v3 { width: 108px; background: #333; padding-right: 8px; }
.status { height: 18px; flex: none; display: flex; align-items: center; font-size: 11.4px; }
.status span { line-height: 18px; flex: none; }
.status .prod { width: 1462px; padding-left: 1px; letter-spacing: -0.12px; }
.s1 { width: 87px; } .s2 { width: 113px; }
.s3 { width: 41px; height: 15px; border-left: 1px solid #ddd; border-right: 1px solid #ddd; }
.s4 { width: 64px; height: 15px; border-right: 1px solid #ddd; padding-left: 3px; display: flex; align-items: center; }
.s5 { width: 102px; padding-left: 47px; }
.tag { margin-left: 28px; }
```
